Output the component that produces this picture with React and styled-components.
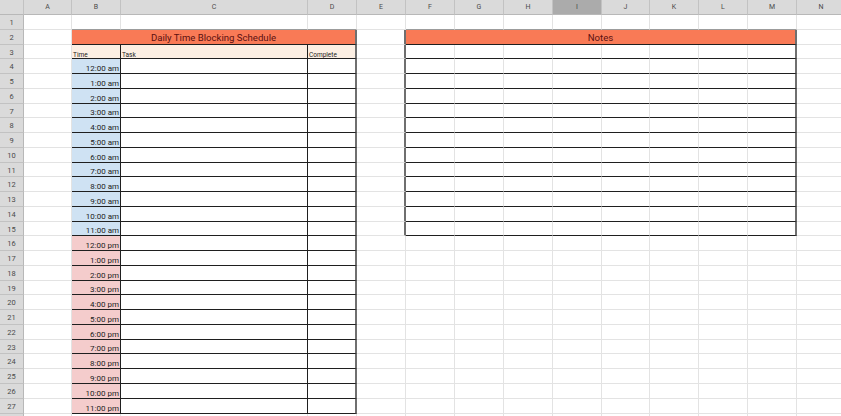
import React from "react";
import styled, { createGlobalStyle, css } from "styled-components";

const GlobalStyle = createGlobalStyle`
  html, body {
    margin: 0;
    padding: 0;
    background: #ffffff;
    overflow: hidden;
  }
  body {
    font-family: "Roboto", "Liberation Sans", Arial, sans-serif;
  }
`;

const Colors = {
  header: "#dadada",
  headerActive: "#ababab",
  headerLine: "#c2c2c2",
  grid: "#e3e3e3",
  mid: "#9c9c9c",
  dark: "#1f1f1f",
  thick: "#6f6f6f",
  title: "#f97a56",
  titleText: "#5b1010",
  peach: "#fcefe3",
  am: "#cfe2f3",
  pm: "#f4cccc",
  text: "#222222",
};

const COLUMNS = [
  { id: "A", w: 48 },
  { id: "B", w: 49 },
  { id: "C", w: 187 },
  { id: "D", w: 49 },
  { id: "E", w: 49 },
  { id: "F", w: 49 },
  { id: "G", w: 49 },
  { id: "H", w: 49 },
  { id: "I", w: 49 },
  { id: "J", w: 48 },
  { id: "K", w: 49 },
  { id: "L", w: 49 },
  { id: "M", w: 49 },
  { id: "N", w: 49 },
];

// 27 labelled rows, plus the sliver of row 28 at the bottom edge
const LABELLED_ROWS = 27;
const ROW_COUNT = 28;
const HEADER_H = 15;
const ROW_H = 14.76;

// integer row heights so the border lines stay crisp
const rowHeights = Array.from({ length: ROW_COUNT }, (_, i) => {
  const top = Math.round(HEADER_H + i * ROW_H);
  const bottom = Math.round(HEADER_H + (i + 1) * ROW_H);
  return bottom - top;
});

const HOURS = Array.from({ length: 24 }, (_, i) => {
  const h = i % 12 === 0 ? 12 : i % 12;
  return `${h}:00 ${i < 12 ? "am" : "pm"}`;
});

const lineCss = (kind) => {
  if (kind === "thick") return `2px solid ${Colors.thick}`;
  return `1px solid ${Colors[kind] || Colors.grid}`;
};

const Sheet = styled.div`
  display: grid;
  grid-template-columns: 24px ${COLUMNS.map((c) => `${c.w}px`).join(" ")};
  grid-template-rows: ${HEADER_H}px ${rowHeights.map((h) => `${h}px`).join(" ")};
  width: max-content;
  color: ${Colors.text};
`;

const Corner = styled.div`
  grid-column: 1;
  grid-row: 1;
  background: ${Colors.header};
  border-right: 1px solid ${Colors.headerLine};
  border-bottom: 1px solid #b8b8b8;
  box-sizing: border-box;
`;

const ColHeader = styled.div`
  grid-row: 1;
  grid-column: ${(p) => p.$col + 2};
  display: flex;
  align-items: center;
  justify-content: center;
  box-sizing: border-box;
  background: ${(p) => (p.$active ? Colors.headerActive : Colors.header)};
  border-right: 1px solid ${Colors.headerLine};
  border-bottom: 1px solid #b8b8b8;
  font-size: 7px;
  color: #4a4a4a;
`;

const RowHeader = styled.div`
  grid-column: 1;
  grid-row: ${(p) => p.$row + 1};
  display: flex;
  align-items: center;
  justify-content: center;
  box-sizing: border-box;
  padding-top: 1px;
  background: ${Colors.header};
  border-right: 1px solid #b8b8b8;
  border-bottom: 1px solid ${Colors.headerLine};
  font-size: 7.5px;
  color: #4a4a4a;
`;

const Cell = styled.div`
  grid-row: ${(p) => p.$row + 1};
  grid-column: ${(p) => `${p.$col + 2} / span ${p.$span || 1}`};
  display: flex;
  align-items: flex-end;
  justify-content: ${(p) =>
    p.$align === "right" ? "flex-end" : p.$align === "center" ? "center" : "flex-start"};
  box-sizing: border-box;
  min-width: 0;
  white-space: nowrap;
  background: ${(p) => p.$fill || "#ffffff"};
  border-right: ${(p) => lineCss(p.$right)};
  border-bottom: ${(p) => lineCss(p.$bottom)};
  padding: 0 1px;
`;

const CellText = styled.span`
  font-size: ${(p) => p.$size}px;
  line-height: ${(p) => p.$size}px;
  color: ${(p) => p.$color || Colors.text};
  ${(p) =>
    p.$title &&
    css`
      margin-bottom: 1px;
    `}
`;

const inSchedule = (row, col) => col >= 1 && col <= 3 && row >= 2 && row <= LABELLED_ROWS;
const inNotes = (row, col) => col >= 5 && col <= 12 && row >= 2 && row <= 15;

function describeCell(row, col) {
  const cell = { row, col, right: "grid", bottom: "grid" };

  // top edges of the two tables
  if (row === 1 && ((col >= 1 && col <= 3) || (col >= 5 && col <= 12))) {
    cell.bottom = "mid";
  }
  // left edge of the notes table
  if (col === 4 && row >= 2 && row <= 15) cell.right = "thick";

  if (inSchedule(row, col)) {
    if (row === 2) {
      if (col !== 1) return null;
      return {
        ...cell,
        span: 3,
        fill: Colors.title,
        right: "thick",
        bottom: "dark",
        align: "center",
        title: true,
        text: "Daily Time Blocking Schedule",
        size: 9.6,
        color: Colors.titleText,
      };
    }
    cell.bottom = "dark";
    cell.right = col === 3 ? "thick" : "dark";
    if (row === 3) {
      cell.fill = Colors.peach;
      cell.text = ["Time", "Task", "Complete"][col - 1];
      cell.size = 6.5;
    } else if (col === 1) {
      cell.fill = row <= 15 ? Colors.am : Colors.pm;
      cell.text = HOURS[row - 4];
      cell.size = 8;
      cell.align = "right";
    }
    return cell;
  }

  if (inNotes(row, col)) {
    if (row === 2) {
      if (col !== 5) return null;
      return {
        ...cell,
        span: 8,
        fill: Colors.title,
        right: "thick",
        bottom: "dark",
        align: "center",
        title: true,
        text: "Notes",
        size: 9.6,
        color: Colors.titleText,
      };
    }
    cell.bottom = "dark";
    if (col === 12) cell.right = "thick";
    return cell;
  }

  return cell;
}

const App = () => {
  const cells = [];
  for (let row = 1; row <= ROW_COUNT; row++) {
    COLUMNS.forEach((_, col) => {
      const c = describeCell(row, col);
      if (c) cells.push(c);
    });
  }

  return (
    <>
      <GlobalStyle />
      <Sheet>
        <Corner />
        {COLUMNS.map((c, i) => (
          <ColHeader key={c.id} $col={i} $active={c.id === "I"}>
            {c.id}
          </ColHeader>
        ))}
        {rowHeights.map((_, i) => (
          <RowHeader key={i} $row={i + 1}>
            {i < LABELLED_ROWS ? i + 1 : null}
          </RowHeader>
        ))}
        {cells.map((c) => (
          <Cell
            key={`${c.row}-${c.col}`}
            $row={c.row}
            $col={c.col}
            $span={c.span}
            $fill={c.fill}
            $right={c.right}
            $bottom={c.bottom}
            $align={c.align}
          >
            {c.text && (
              <CellText $size={c.size} $color={c.color} $title={c.title}>
                {c.text}
              </CellText>
            )}
          </Cell>
        ))}
      </Sheet>
    </>
  );
};

export default App;
